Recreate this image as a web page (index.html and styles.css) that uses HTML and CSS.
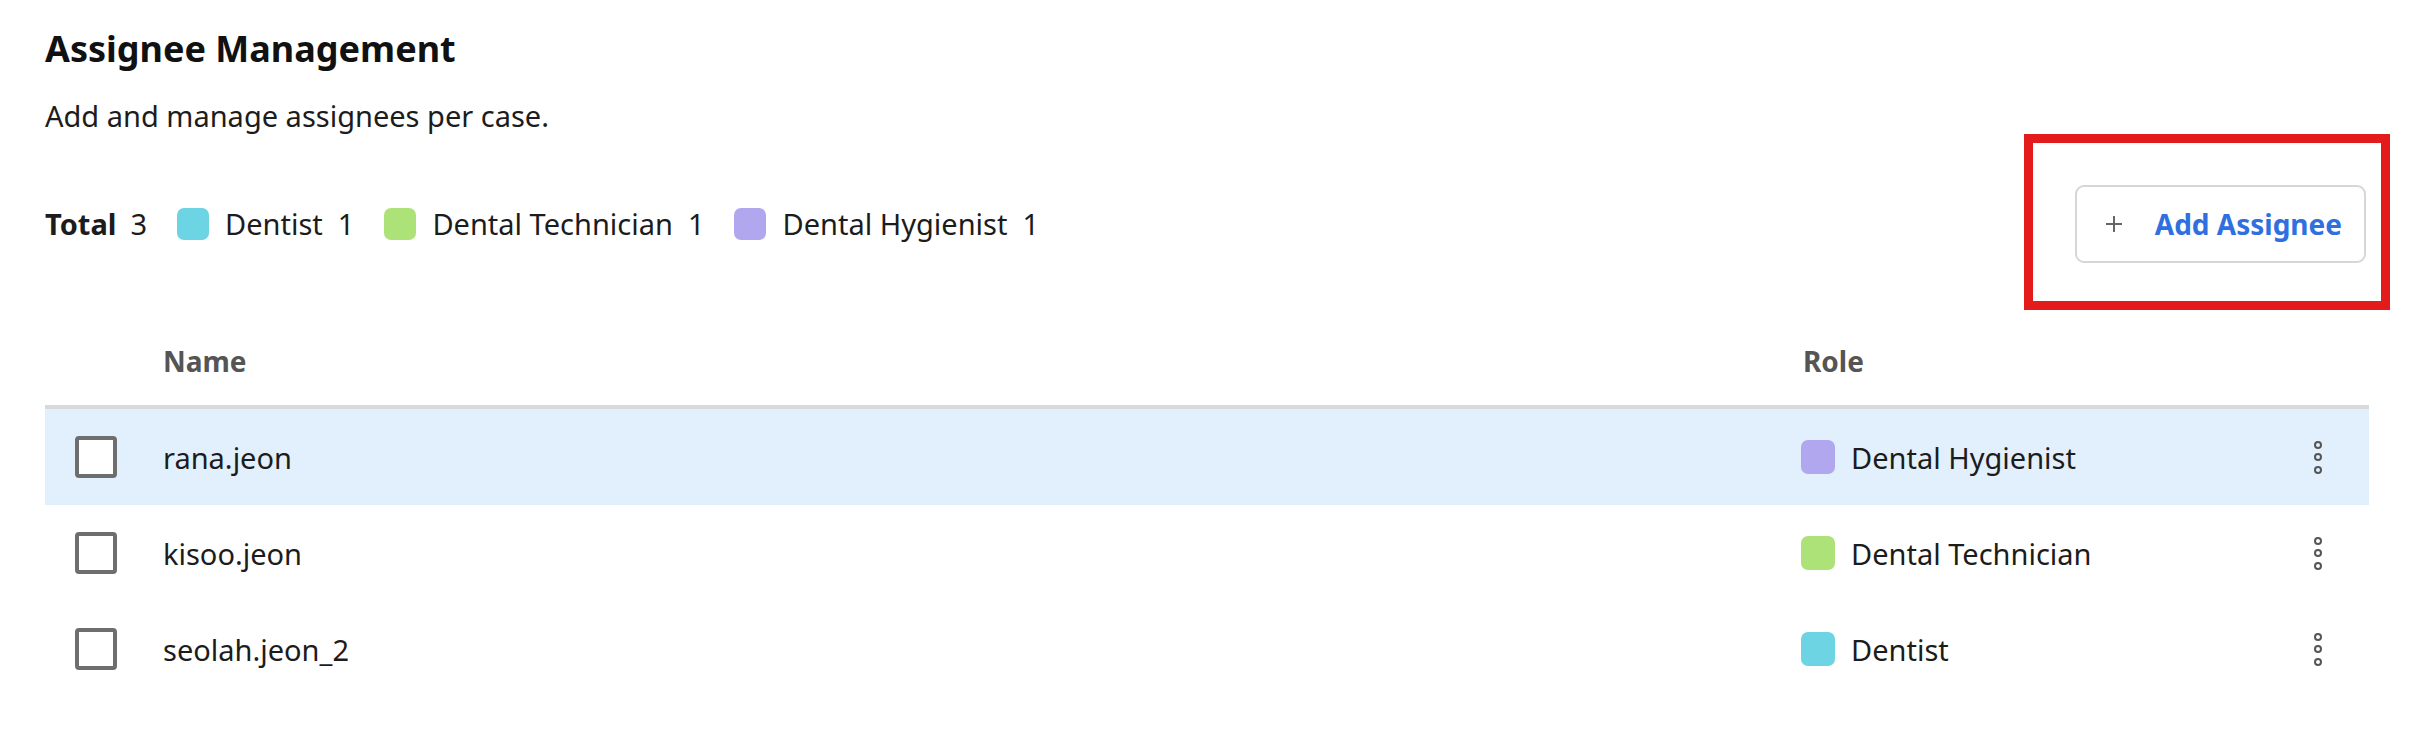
FILE: index.html
```html
<!DOCTYPE html>
<html lang="en">
<head>
<meta charset="utf-8">
<title>Assignee Management</title>
<link rel="stylesheet" href="styles.css">
</head>
<body>
<main class="page">
  <h1 class="title">Assignee Management</h1>
  <p class="subtitle">Add and manage assignees per case.</p>

  <div class="toolbar">
    <ul class="legend">
      <li class="legend-total"><span class="legend-total-label">Total</span><span class="legend-count">3</span></li>
      <li class="legend-item"><span class="swatch swatch-dentist"></span><span class="legend-label">Dentist</span><span class="legend-count">1</span></li>
      <li class="legend-item"><span class="swatch swatch-tech"></span><span class="legend-label">Dental Technician</span><span class="legend-count">1</span></li>
      <li class="legend-item"><span class="swatch swatch-hyg"></span><span class="legend-label">Dental Hygienist</span><span class="legend-count">1</span></li>
    </ul>
    <div class="add-wrap">
      <button class="add-btn" type="button">
        <svg class="plus" viewBox="0 0 18 18" width="18" height="18" aria-hidden="true"><path d="M9 1v16M1 9h16" stroke="#666" stroke-width="2" fill="none"/></svg>
        <span class="add-label">Add Assignee</span>
      </button>
      <span class="highlight-box" aria-hidden="true"></span>
    </div>
  </div>

  <div class="table">
    <div class="row head">
      <div class="cell"></div>
      <div class="cell">Name</div>
      <div class="cell role-head">Role</div>
      <div class="cell"></div>
    </div>
    <div class="row body selected">
      <div class="cell check-cell"><span class="checkbox"></span></div>
      <div class="cell">rana.jeon</div>
      <div class="cell role"><span class="swatch swatch-hyg"></span>Dental Hygienist</div>
      <div class="cell more"><span class="kebab"><i></i><i></i><i></i></span></div>
    </div>
    <div class="row body">
      <div class="cell check-cell"><span class="checkbox"></span></div>
      <div class="cell">kisoo.jeon</div>
      <div class="cell role"><span class="swatch swatch-tech"></span>Dental Technician</div>
      <div class="cell more"><span class="kebab"><i></i><i></i><i></i></span></div>
    </div>
    <div class="row body">
      <div class="cell check-cell"><span class="checkbox"></span></div>
      <div class="cell">seolah.jeon_2</div>
      <div class="cell role"><span class="swatch swatch-dentist"></span>Dentist</div>
      <div class="cell more"><span class="kebab"><i></i><i></i><i></i></span></div>
    </div>
  </div>
</main>
</body>
</html>
```
FILE: styles.css
```css
* { box-sizing: border-box; }
html, body { margin: 0; padding: 0; background: #fff; }
body {
  font-family: "Noto Sans", "Open Sans", sans-serif;
  color: #1c1c1c;
  font-size: 29px;
}
.page {
  padding: 25px 46px 0 45px;
}
.title {
  margin: 0;
  font-size: 36px;
  line-height: 48px;
  font-weight: 700;
  color: #111;
}
.subtitle {
  margin: 23px 0 0;
  font-size: 29px;
  line-height: 40px;
  color: #1c1c1c;
}
.toolbar {
  margin-top: 49px;
  display: flex;
  align-items: center;
  justify-content: space-between;
}
.legend {
  list-style: none;
  margin: 0;
  padding: 0;
  display: flex;
  align-items: center;
  gap: 30px;
  line-height: 40px;
  white-space: nowrap;
}
.legend-total, .legend-item {
  display: flex;
  align-items: center;
}
.legend-total-label { font-weight: 700; margin-right: 14px; }
.legend-item .swatch { margin-right: 16px; }
.legend-count { margin-left: 15px; }
.legend-total .legend-count { margin-left: 0; }
.swatch {
  display: inline-block;
  width: 32px;
  height: 32px;
  border-radius: 7px;
  flex: none;
}
.swatch-dentist { background: #6dd4e3; }
.swatch-tech { background: #ade279; }
.swatch-hyg { background: #b0a7ef; }

.add-wrap { position: relative; margin-right: 3px; }
.add-btn {
  display: flex;
  align-items: center;
  height: 78px;
  padding: 0 22px 0 28px;
  border: 2px solid #d6d6d6;
  border-radius: 9px;
  background: #fff;
  font-family: inherit;
  white-space: nowrap;
  cursor: pointer;
}
.plus { flex: none; }
.add-label {
  margin-left: 32px;
  font-size: 28px;
  font-weight: 700;
  color: #2f6fe0;
  line-height: 40px;
}
.highlight-box {
  position: absolute;
  top: -51px;
  left: -51px;
  right: -24px;
  bottom: -47px;
  border: 9px solid #e31b1b;
  pointer-events: none;
}

.table { margin-top: 54px; }
.row {
  display: grid;
  grid-template-columns: 118px 1fr 473px 96px;
  align-items: center;
}
.row.head {
  height: 92px;
  border-bottom: 4px solid #d9d9d9;
  font-weight: 700;
  font-size: 28px;
  color: #555;
}
.role-head { padding-left: 3px; }
.row.body { height: 96px; }
.row.selected { background: #e2f0fd; }
.check-cell { padding-left: 30px; display: flex; align-items: center; }
.checkbox {
  display: block;
  width: 42px;
  height: 42px;
  border: 4px solid #6e6e6e;
  border-radius: 4px;
  background: #fff;
}
.role { display: flex; align-items: center; padding-left: 1px; }
.role .swatch { width: 34px; height: 34px; margin-right: 16px; }
.more { display: flex; justify-content: center; padding-right: 6px; }
.kebab {
  display: flex;
  flex-direction: column;
  gap: 4.5px;
}
.kebab i {
  display: block;
  width: 8px;
  height: 8px;
  border: 2px solid #555;
  border-radius: 50%;
}
```
